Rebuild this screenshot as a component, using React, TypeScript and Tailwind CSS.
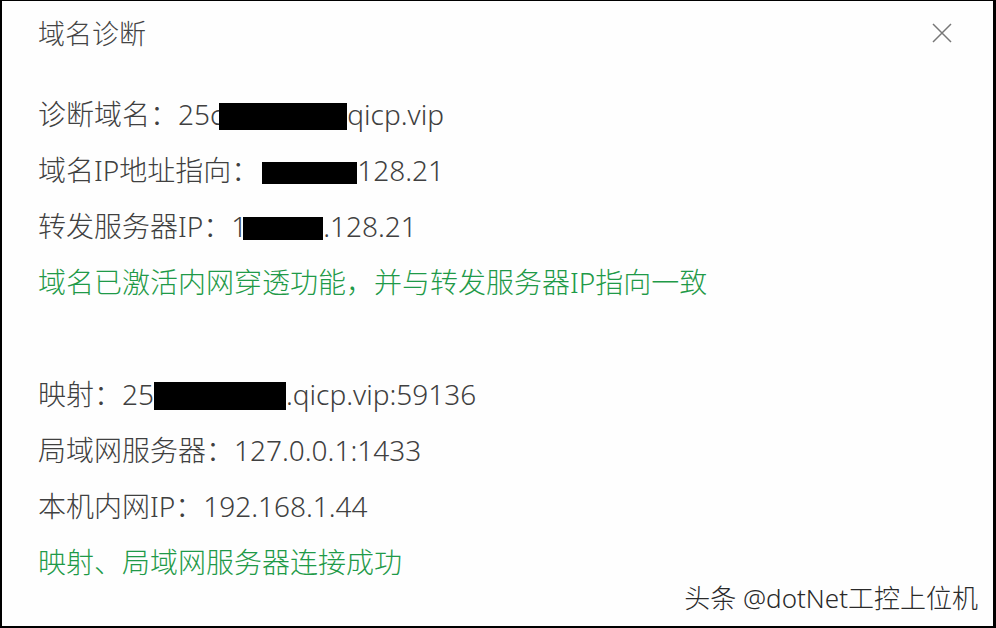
import React from 'react';

const font = { fontFamily: '"Noto Sans", "Noto Sans CJK SC", sans-serif' };

function Mask({ w, h, className = '' }: { w: string; h: string; className?: string }) {
    return <span className={`inline-block bg-black align-middle ${w} ${h} ${className}`} />;
}

export default function App() {
    return (
        <div
            className="relative w-[996px] h-[628px] bg-[#fefefe] border-l-2 border-t border-r-[3px] border-b-2 border-black text-[#404040] overflow-hidden"
            style={font}
        >
            {/* cabeçalho */}
            <div className="flex items-center justify-between pl-[36px] pr-[40px] pt-[11px] h-[54px]">
                <h2 className="text-[27px] leading-[40px] font-light text-[#444]">域名诊断</h2>
                <button className="w-[22px] h-[22px] flex items-center justify-center -mt-[2px]">
                    <svg width="20" height="20" viewBox="0 0 20 20" fill="none">
                        <path d="M1 1L19 19M19 1L1 19" stroke="#777" strokeWidth="1.5" />
                    </svg>
                </button>
            </div>

            <div className="pl-[36px] pt-[31px] text-[28px] leading-[56px] font-light">
                <div className="whitespace-nowrap">
                    诊断域名：25c<Mask w="w-[128px]" h="h-[27px]" className="-ml-[4px] -mt-[3px]" />qicp.vip
                </div>
                <div className="whitespace-nowrap">
                    域名IP地址指向：<Mask w="w-[95px]" h="h-[22px]" className="ml-[3px] -mt-[2px]" />128.21
                </div>
                <div className="whitespace-nowrap">
                    转发服务器IP：1<Mask w="w-[80px]" h="h-[23px]" className="-ml-[4px] -mt-[2px]" />.128.21
                </div>
                <div className="whitespace-nowrap text-[#1f9a48]">域名已激活内网穿透功能，并与转发服务器IP指向一致</div>
                <div className="h-[56px]" />
                <div className="whitespace-nowrap">
                    映射：25<Mask w="w-[132px]" h="h-[28px]" className="-mt-[4px]" />.qicp.vip:59136
                </div>
                <div className="whitespace-nowrap">局域网服务器：127.0.0.1:1433</div>
                <div className="whitespace-nowrap">本机内网IP：192.168.1.44</div>
                <div className="whitespace-nowrap text-[#1f9a48]">映射、局域网服务器连接成功</div>
            </div>

            {/* marca d'água */}
            <div
                className="absolute right-[15px] bottom-[12px] text-[26px] leading-[32px] font-light text-[#2a2a2a] whitespace-nowrap"
                style={{ textShadow: '1px 1px 0 #fff, -1px -1px 0 #fff, 1px -1px 0 #fff, -1px 1px 0 #fff' }}
            >
                头条 @dotNet工控上位机
            </div>
        </div>
    );
}
